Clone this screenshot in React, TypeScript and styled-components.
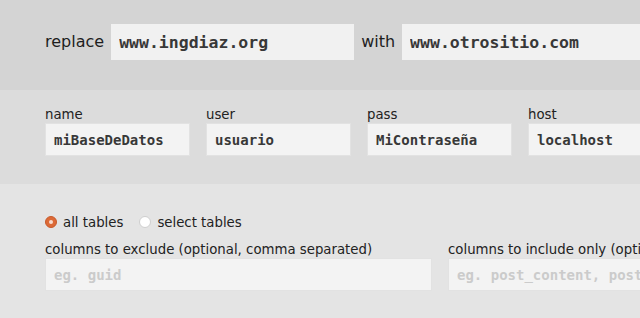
import styled, { createGlobalStyle } from 'styled-components';

const GlobalStyle = createGlobalStyle`
  body {
    margin: 0;
    background: #e4e4e4;
    font-family: 'DejaVu Sans', Verdana, sans-serif;
    color: #222;
    overflow: hidden;
  }
`;

const FIELDS = [
  { label: 'name', value: 'miBaseDeDatos' },
  { label: 'user', value: 'usuario' },
  { label: 'pass', value: 'MiContraseña' },
  { label: 'host', value: 'localhost' },
];

const App = () => {
  return (
    <Page>
      <GlobalStyle />
      <ReplaceBar>
        <BigLabel>replace</BigLabel>
        <BigInput defaultValue='www.ingdiaz.org' spellCheck='false' />
        <BigLabel>with</BigLabel>
        <BigInput defaultValue='www.otrositio.com' spellCheck='false' />
      </ReplaceBar>

      <DbBar>
        {FIELDS.map((field) => (
          <Field key={field.label}>
            <Label>{field.label}</Label>
            <Input $width={145} defaultValue={field.value} spellCheck='false' />
          </Field>
        ))}
      </DbBar>

      <TablesBar>
        <RadioRow>
          <RadioOption>
            <Radio $checked />
            all tables
          </RadioOption>
          <RadioOption>
            <Radio />
            select tables
          </RadioOption>
        </RadioRow>
        <ColumnsRow>
          <Field>
            <Label>columns to exclude (optional, comma separated)</Label>
            <Input $width={387} placeholder='eg. guid' />
          </Field>
          <Field>
            <Label>columns to include only (optional, comma separated)</Label>
            <Input $width={387} placeholder='eg. post_content, post_title' />
          </Field>
        </ColumnsRow>
      </TablesBar>
    </Page>
  );
};

const Page = styled.div`
  width: 640px;
  overflow: hidden;
  white-space: nowrap;
`;

const Section = styled.section`
  padding-left: 45px;
  display: flex;
`;

const ReplaceBar = styled(Section)`
  height: 90px;
  box-sizing: border-box;
  padding-top: 24px;
  align-items: flex-start;
  gap: 7px;
  background: #d4d4d4;
`;

const BigLabel = styled.span`
  font-size: 16px;
  line-height: 36px;
  color: #1e1e1e;
`;

const BigInput = styled.input`
  flex: none;
  width: 243px;
  height: 36px;
  box-sizing: border-box;
  padding: 0 8px;
  border: none;
  background: #f1f1f1;
  font-family: 'DejaVu Sans Mono', monospace;
  font-weight: bold;
  font-size: 16.5px;
  color: #383838;
  outline: none;
`;

const DbBar = styled(Section)`
  height: 94px;
  box-sizing: border-box;
  padding-top: 16px;
  gap: 16px;
  background: #dcdcdc;
`;

const Field = styled.div`
  display: flex;
  flex-direction: column;
  flex: none;
`;

const Label = styled.label`
  font-size: 13.3px;
  line-height: 17px;
  color: #222;
`;

const Input = styled.input<{ $width: number }>`
  width: ${(p) => p.$width}px;
  height: 33px;
  box-sizing: border-box;
  padding: 0 8px;
  border: 1px solid #e2e2e2;
  background: #f3f3f3;
  font-family: 'DejaVu Sans Mono', monospace;
  font-weight: bold;
  font-size: 14px;
  color: #383838;
  outline: none;

  &::placeholder {
    color: #cbcbcb;
  }
`;

const TablesBar = styled(Section)`
  flex-direction: column;
  height: 134px;
  box-sizing: border-box;
  padding-top: 29px;
  background: #e4e4e4;
`;

const RadioRow = styled.div`
  display: flex;
  gap: 16px;
  height: 18px;
  align-items: center;
  margin-bottom: 10px;
`;

const RadioOption = styled.label`
  display: flex;
  align-items: center;
  gap: 6px;
  font-size: 13.3px;
  color: #222;
`;

const Radio = styled.span<{ $checked?: boolean }>`
  width: 12px;
  height: 12px;
  box-sizing: border-box;
  border-radius: 50%;
  position: relative;
  border: 1px solid ${(p) => (p.$checked ? '#c85a2b' : '#cfcfcf')};
  background: ${(p) => (p.$checked ? '#dc6a37' : '#fff')};

  &::after {
    content: '';
    display: ${(p) => (p.$checked ? 'block' : 'none')};
    position: absolute;
    left: 3px;
    top: 3px;
    width: 4px;
    height: 4px;
    border-radius: 50%;
    background: #f8dccf;
  }
`;

const ColumnsRow = styled.div`
  display: flex;
  gap: 16px;
`;

export default App;
